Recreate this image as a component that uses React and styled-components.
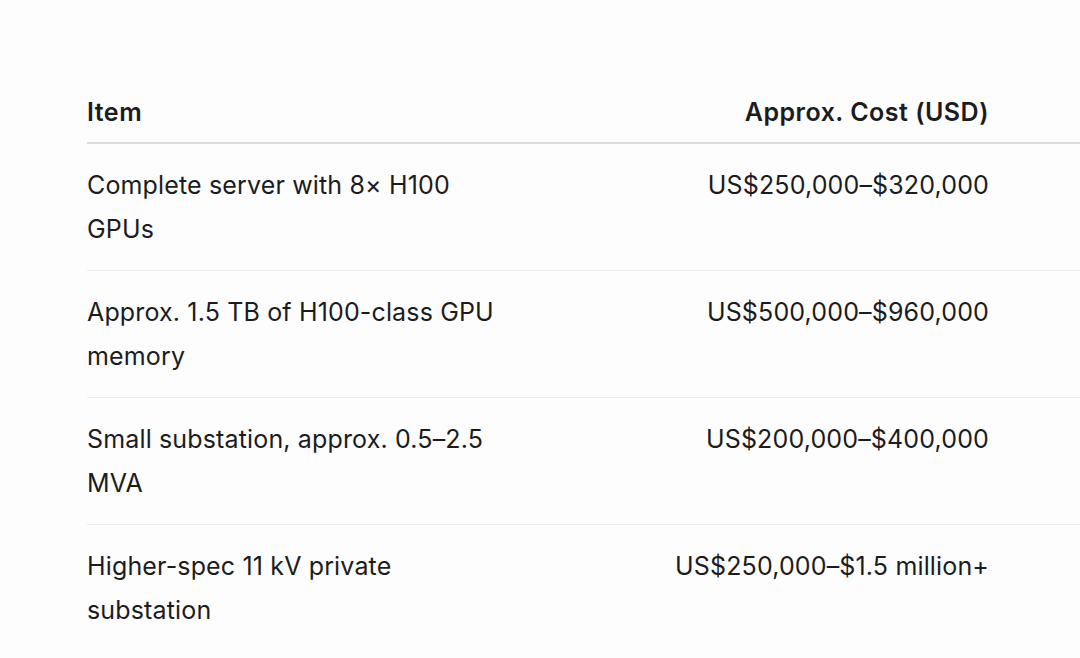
import React from 'react'
import styled, { createGlobalStyle } from 'styled-components'

const GlobalStyle = createGlobalStyle`
  html, body {
    margin: 0;
    padding: 0;
    background: #fdfdfd;
    overflow: hidden;
  }
  body {
    font-family: Inter, "Noto Sans", "Liberation Sans", sans-serif;
    color: #1c1c1e;
    -webkit-font-smoothing: antialiased;
  }
`

const rows = [
  { item: 'Complete server with 8× H100 GPUs', cost: 'US$250,000–$320,000' },
  { item: 'Approx. 1.5 TB of H100-class GPU memory', cost: 'US$500,000–$960,000' },
  { item: 'Small substation, approx. 0.5–2.5 MVA', cost: 'US$200,000–$400,000' },
  { item: 'Higher-spec 11 kV private substation', cost: 'US$250,000–$1.5 million+' },
]

const Page = styled.div`
  width: 1080px;
  height: 658px;
  padding: 90px 0 0 87px;
  box-sizing: border-box;
  overflow: hidden;
`

const Row = styled.div`
  display: grid;
  grid-template-columns: 416px 486px;
  width: 1100px;
  padding: ${p => (p.$head ? '0 0 8px' : '19px 0 19px')};
  border-bottom: ${p => (p.$head ? '2px solid #dcdcdc' : '1px solid #ececec')};
  font-size: 25px;
  line-height: 44px;
  font-weight: ${p => (p.$head ? 600 : 400)};
  letter-spacing: ${p => (p.$head ? '0.5px' : '0.15px')};

  &:last-child {
    border-bottom: none;
  }
`

const Cell = styled.div`
  text-align: ${p => (p.$right ? 'right' : 'left')};
`

export default function App() {
  return (
    <>
      <GlobalStyle />
      <Page>
        <Row $head>
          <Cell>Item</Cell>
          <Cell $right>Approx. Cost (USD)</Cell>
        </Row>
        {rows.map(r => (
          <Row key={r.item}>
            <Cell>{r.item}</Cell>
            <Cell $right>{r.cost}</Cell>
          </Row>
        ))}
      </Page>
    </>
  )
}
